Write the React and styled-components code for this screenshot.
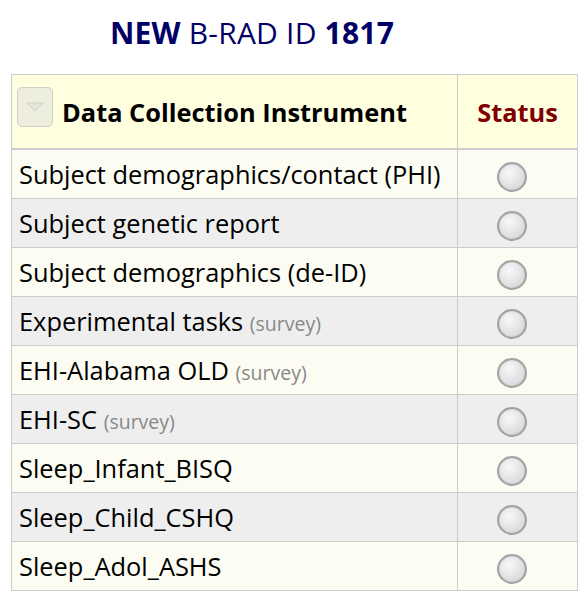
import React from "react";
import styled, { createGlobalStyle } from "styled-components";

const Global = createGlobalStyle`
  html, body { margin: 0; padding: 0; background: #fff; }
  body { font-family: "Open Sans", "Noto Sans", sans-serif; }
`;

const Page = styled.div`
  padding: 13px 8px 0 11px;
  width: 567px;
`;

const Title = styled.div`
  text-align: center;
  color: #000066;
  font-size: 30px;
  letter-spacing: 0.2px;
  line-height: 40px;
  padding-right: 85px;
  margin-bottom: 21px;
  b { font-weight: 700; }
`;

const Table = styled.table`
  border-collapse: collapse;
  width: 567px;
  border: 1px solid #cccccc;
  font-size: 25.4px;
`;

const HeadCell = styled.th`
  background: #ffffe0;
  border: 1px solid #cccccc;
  border-bottom: 2px solid #cccccc;
  height: 73px;
  padding: 0 5px;
  font-weight: 700;
  font-size: 25.4px;
  color: ${(p) => (p.$status ? "#800000" : "#000")};
  text-align: ${(p) => (p.$status ? "center" : "left")};
  width: ${(p) => (p.$status ? "109px" : "auto")};
`;

const HeadInner = styled.div`
  display: flex;
  align-items: center;
  gap: 9px;
`;

const Toggle = styled.div`
  width: 36px;
  height: 40px;
  flex: none;
  box-sizing: border-box;
  border: 1px solid #cfcfc4;
  border-radius: 5px;
  background: #eeeedf;
  display: flex;
  align-items: center;
  justify-content: center;
  margin-top: -10px;
`;

const Row = styled.tr`
  background: ${(p) => (p.$alt ? "#eeeeee" : "#fcfcf3")};
`;

const Cell = styled.td`
  border: 1px solid #cccccc;
  height: 48px;
  padding: 0 7px;
  color: #000;
  white-space: nowrap;
  text-align: ${(p) => (p.$center ? "center" : "left")};
  vertical-align: middle;
`;

const Survey = styled.span`
  color: #888;
  font-size: 19.5px;
`;

const Radio = styled.span`
  display: inline-block;
  vertical-align: middle;
  width: 30px;
  height: 30px;
  box-sizing: border-box;
  border-radius: 50%;
  border: 2px solid #a3a3a3;
  background: radial-gradient(circle at 40% 35%, #f8f8f8 0%, #e6e6e6 45%, #cfcfcf 100%);
  box-shadow: inset 0 0 1px #888;
  margin: 2px 12px 0 0;
`;

const rows = [
  ["Subject demographics/contact (PHI)"],
  ["Subject genetic report"],
  ["Subject demographics (de-ID)"],
  ["Experimental tasks", true],
  ["EHI-Alabama OLD", true],
  ["EHI-SC", true],
  ["Sleep_Infant_BISQ"],
  ["Sleep_Child_CSHQ"],
  ["Sleep_Adol_ASHS"],
];

export default function App() {
  return (
    <>
      <Global />
      <Page>
        <Title>
          <b>NEW</b> B-RAD ID <b>1817</b>
        </Title>
        <Table>
          <thead>
            <tr>
              <HeadCell>
                <HeadInner>
                  <Toggle>
                    <svg width="18" height="10" viewBox="0 0 18 10">
                      <path d="M1 1 L9 9 L17 1 Z" fill="#e6e6dc" stroke="#cfcfc6" strokeWidth="1" />
                    </svg>
                  </Toggle>
                  <span>Data Collection Instrument</span>
                </HeadInner>
              </HeadCell>
              <HeadCell $status>Status</HeadCell>
            </tr>
          </thead>
          <tbody>
            {rows.map(([name, survey], i) => (
              <Row key={name} $alt={i % 2 === 1}>
                <Cell>
                  {name}
                  {survey && (
                    <>
                      {" "}
                      <Survey>(survey)</Survey>
                    </>
                  )}
                </Cell>
                <Cell $center>
                  <Radio />
                </Cell>
              </Row>
            ))}
          </tbody>
        </Table>
      </Page>
    </>
  );
}
